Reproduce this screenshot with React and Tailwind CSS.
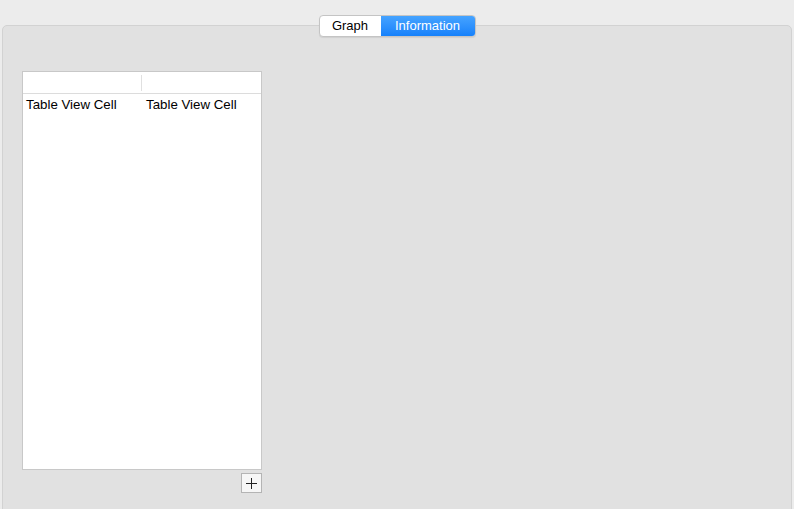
import React from 'react';

const font = { fontFamily: '"Liberation Sans", Arial, sans-serif' };

const Segmented = () => (
  <div className="relative z-10 mx-auto flex h-[22px] w-[157px] shrink-0 overflow-hidden rounded-[4px] border border-[#c4c4c4] bg-white text-[13px] shadow-[0_1px_1px_rgba(0,0,0,0.08)]">
    <div className="flex w-[61px] items-center justify-center text-black">Graph</div>
    <div className="flex flex-1 items-center justify-center bg-gradient-to-b from-[#45a3ff] to-[#1581fb] text-white">
      Information
    </div>
  </div>
);

const TableView = () => (
  <div className="flex w-[240px] flex-col">
    <div className="flex h-[399px] w-[240px] flex-col border border-[#c8c8c8] bg-white">
      {/* header */}
      <div className="flex h-[22px] shrink-0 items-center border-b border-[#dcdcdc]">
        <div className="h-[16px] w-[119px] border-r border-[#e0e0e0]" />
      </div>
      <div className="flex h-[22px] items-center text-[13.3px] text-black">
        <div className="w-[119px] pl-[3px]">Table View Cell</div>
        <div className="pl-[4px]">Table View Cell</div>
      </div>
    </div>
    <div className="mt-[3px] flex justify-end">
      <button className="flex h-[20px] w-[21px] items-center justify-center border border-[#b4b4b4] bg-[#f6f6f6]">
        <svg width="13" height="13" viewBox="0 0 13 13">
          <path d="M6.5 1v11M1 6.5h11" stroke="#222" strokeWidth="1" fill="none" />
        </svg>
      </button>
    </div>
  </div>
);

export default function App() {
  return (
    <div className="flex h-[509px] w-[794px] flex-col overflow-hidden bg-[#ececec] pt-[15px]" style={font}>
      <Segmented />
      <div className="mx-[2px] -mt-[12px] flex h-[500px] shrink-0 flex-col items-start rounded-t-[5px] border border-[#d2d2d2] bg-[#e1e1e1] pl-[19px] pt-[45px]">
        <TableView />
      </div>
    </div>
  );
}
